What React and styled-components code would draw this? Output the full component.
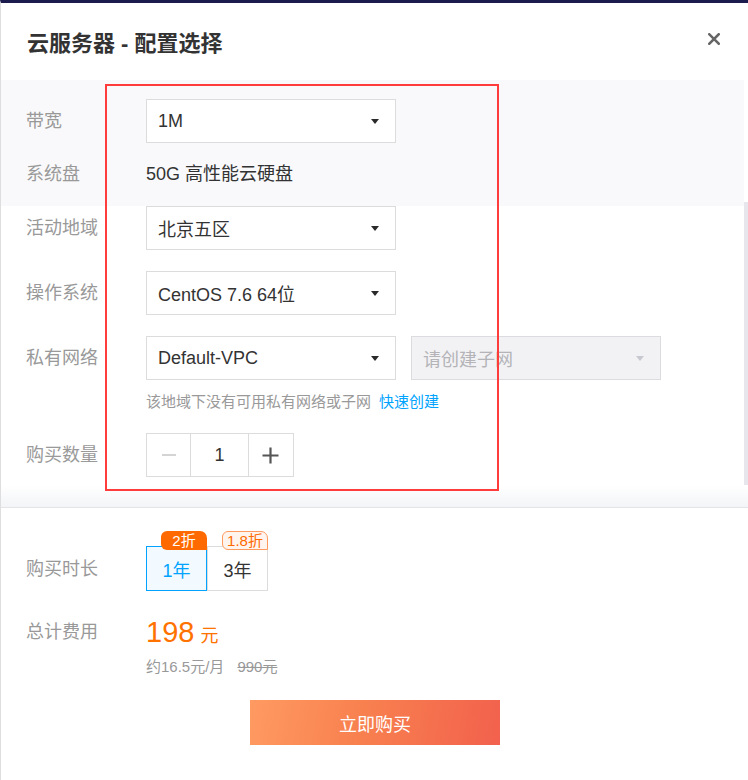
import React from 'react';
import styled, { createGlobalStyle } from 'styled-components';

const GlobalStyle = createGlobalStyle`
  html, body {
    margin: 0;
    padding: 0;
    background: #fff;
  }
  body {
    font-family: "Liberation Sans", "Noto Sans CJK SC", sans-serif;
    color: #333;
  }
  * {
    box-sizing: border-box;
  }
`;

// whole dialog
const Page = styled.div`
  position: relative;
  width: 748px;
  height: 780px;
  border-top: 3px solid #1b1b4e;
  border-left: 1px solid #dedede;
  background: #fff;
  display: flex;
  flex-direction: column;
  overflow: hidden;
`;

const Header = styled.div`
  height: 77px;
  flex-shrink: 0;
  padding: 26px 26px 0 26px;
  display: flex;
  justify-content: space-between;
  align-items: flex-start;
`;

const Title = styled.h1`
  margin: 0;
  font-size: 22px;
  line-height: 30px;
  font-weight: 700;
  color: #333;
`;

const Close = styled.button`
  margin: 4px 2px 0 0;
  padding: 0;
  border: 0;
  background: none;
  width: 12px;
  height: 12px;
  display: flex;
  cursor: pointer;
`;

const Body = styled.div`
  position: relative;
  display: flex;
  flex-direction: column;
  flex-shrink: 0;
`;

const FixedPanel = styled.div`
  background: #f9f9fb;
  margin-right: 4px;
  padding: 19px 0 10px 25px;
  display: flex;
  flex-direction: column;
  gap: 9px;
`;

const ScrollArea = styled.div`
  display: flex;
  flex-direction: column;
`;

const Rows = styled.div`
  padding: 0 0 8px 25px;
  display: flex;
  flex-direction: column;
  gap: 21px;
`;

const Fade = styled.div`
  height: 23px;
  background: linear-gradient(to bottom, #ffffff, #f3f4f7);
  border-bottom: 1px solid #e4e4e8;
`;

const ScrollThumb = styled.div`
  position: absolute;
  right: 0;
  top: 122px;
  width: 4px;
  height: 283px;
  background: #e6e6ec;
`;

const Row = styled.div`
  display: grid;
  grid-template-columns: 120px auto;
  align-items: ${({ $top }) => ($top ? 'start' : 'center')};
`;

const Label = styled.div`
  font-size: 18px;
  line-height: ${({ $lh }) => $lh || 44}px;
  color: #999;
`;

const Plain = styled.div`
  font-size: 18px;
  line-height: 44px;
  color: #333;
`;

const Controls = styled.div`
  display: flex;
  flex-direction: column;
`;

const SelectGroup = styled.div`
  display: flex;
  gap: 15px;
`;

const Select = styled.div`
  width: 250px;
  height: 44px;
  border: 1px solid ${({ $disabled }) => ($disabled ? '#dcdce0' : '#dcdcdc')};
  background: ${({ $disabled }) => ($disabled ? '#f2f2f5' : '#fff')};
  color: ${({ $disabled }) => ($disabled ? '#b4b4b8' : '#333')};
  font-size: 18px;
  padding: 0 16px 0 11px;
  display: flex;
  align-items: center;
  justify-content: space-between;
`;

const Caret = styled.span`
  width: 0;
  height: 0;
  border-left: 4.5px solid transparent;
  border-right: 4.5px solid transparent;
  border-top: 5px solid ${({ $disabled }) => ($disabled ? '#c8c8d0' : '#2a2a2a')};
`;

const Hint = styled.div`
  margin-top: 12px;
  font-size: 15px;
  line-height: 20px;
  color: #999;
`;

const Link = styled.a`
  margin-left: 8px;
  color: #00a4ff;
  text-decoration: none;
`;

const Stepper = styled.div`
  display: flex;
  width: 148px;
  height: 44px;
  border: 1px solid #dcdcdc;
`;

const StepBtn = styled.div`
  width: 43px;
  display: flex;
  align-items: center;
  justify-content: center;
`;

const StepValue = styled.div`
  width: 59px;
  border-left: 1px solid #dcdcdc;
  border-right: 1px solid #dcdcdc;
  display: flex;
  align-items: center;
  justify-content: center;
  font-size: 18px;
  color: #333;
`;

const Footer = styled.div`
  padding: 38px 0 0 25px;
  display: flex;
  flex-direction: column;
  gap: 21px;
`;

const Durations = styled.div`
  display: flex;
`;

const Duration = styled.div`
  position: relative;
  width: 61px;
  height: 45px;
  border: 1px solid ${({ $active }) => ($active ? '#00a4ff' : '#dcdcdc')};
  background: ${({ $active }) => ($active ? '#f2faff' : '#fff')};
  color: ${({ $active }) => ($active ? '#00a4ff' : '#333')};
  font-size: 18px;
  display: flex;
  align-items: center;
  justify-content: center;
`;

const Discount = styled.span`
  position: absolute;
  top: -16px;
  right: -1px;
  min-width: 46px;
  height: 19px;
  padding: 0 4px;
  border-radius: 6px 7px 0 6px;
  font-size: 15px;
  line-height: ${({ $solid }) => ($solid ? 19 : 17)}px;
  text-align: center;
  color: ${({ $solid }) => ($solid ? '#fff' : '#ff6a00')};
  background: ${({ $solid }) => ($solid ? '#ff6a00' : '#fff5ee')};
  border: ${({ $solid }) => ($solid ? 'none' : '1px solid #ff9a5e')};
`;

const PriceBlock = styled.div`
  display: flex;
  flex-direction: column;
`;

const PriceLine = styled.div`
  line-height: 40px;
  color: #ff7200;
`;

const Amount = styled.span`
  font-size: 29px;
`;

const Unit = styled.span`
  margin-left: 6px;
  font-size: 18px;
`;

const SubLine = styled.div`
  font-size: 15px;
  line-height: 20px;
  color: #999;
`;

const Strike = styled.span`
  margin-left: 13px;
  text-decoration: line-through;
`;

const BuyButton = styled.button`
  align-self: center;
  margin: 2px 0 0 -24px;
  width: 250px;
  height: 45px;
  border: 0;
  background: linear-gradient(100deg, #ff9a62 0%, #f8804f 45%, #f2614d 100%);
  color: #fff;
  font-family: inherit;
  font-size: 18px;
  cursor: pointer;
`;

// annotation frame drawn over the form
const Highlight = styled.div`
  position: absolute;
  left: 104px;
  top: 81px;
  width: 394px;
  height: 407px;
  border: 2px solid #ff3b3b;
  pointer-events: none;
`;

const CloseIcon = () => (
  <svg width="12" height="12" viewBox="0 0 12 12">
    <path d="M1.3 1.3 L10.7 10.7 M10.7 1.3 L1.3 10.7" stroke="#666" strokeWidth="2.6" strokeLinecap="square" />
  </svg>
);

const MinusIcon = () => (
  <svg width="16" height="16" viewBox="0 0 16 16">
    <path d="M1 8 H15" stroke="#d4d4d4" strokeWidth="2" />
  </svg>
);

const PlusIcon = () => (
  <svg width="17" height="17" viewBox="0 0 17 17">
    <path d="M0.5 8.5 H16.5 M8.5 0.5 V16.5" stroke="#555" strokeWidth="2.2" />
  </svg>
);

const Dropdown = ({ value, disabled }) => (
  <Select $disabled={disabled}>
    <span>{value}</span>
    <Caret $disabled={disabled} />
  </Select>
);

export default function App() {
  return (
    <>
      <GlobalStyle />
      <Page>
        <Header>
          <Title>云服务器 - 配置选择</Title>
          <Close aria-label="关闭">
            <CloseIcon />
          </Close>
        </Header>

        <Body>
          <FixedPanel>
            <Row>
              <Label>带宽</Label>
              <Dropdown value="1M" />
            </Row>
            <Row>
              <Label>系统盘</Label>
              <Plain>50G 高性能云硬盘</Plain>
            </Row>
          </FixedPanel>

          <ScrollArea>
            <Rows>
              <Row>
                <Label>活动地域</Label>
                <Dropdown value="北京五区" />
              </Row>
              <Row>
                <Label>操作系统</Label>
                <Dropdown value="CentOS 7.6 64位" />
              </Row>
              <Row $top>
                <Label>私有网络</Label>
                <Controls>
                  <SelectGroup>
                    <Dropdown value="Default-VPC" />
                    <Dropdown value="请创建子网" disabled />
                  </SelectGroup>
                  <Hint>
                    该地域下没有可用私有网络或子网
                    <Link href="#">快速创建</Link>
                  </Hint>
                </Controls>
              </Row>
              <Row>
                <Label>购买数量</Label>
                <Stepper>
                  <StepBtn>
                    <MinusIcon />
                  </StepBtn>
                  <StepValue>1</StepValue>
                  <StepBtn>
                    <PlusIcon />
                  </StepBtn>
                </Stepper>
              </Row>
            </Rows>
            <Fade />
          </ScrollArea>
          <ScrollThumb />
        </Body>

        <Footer>
          <Row>
            <Label>购买时长</Label>
            <Durations>
              <Duration $active>
                1年
                <Discount $solid>2折</Discount>
              </Duration>
              <Duration>
                3年
                <Discount>1.8折</Discount>
              </Duration>
            </Durations>
          </Row>
          <Row $top>
            <Label $lh={40}>总计费用</Label>
            <PriceBlock>
              <PriceLine>
                <Amount>198</Amount>
                <Unit>元</Unit>
              </PriceLine>
              <SubLine>
                约16.5元/月
                <Strike>990元</Strike>
              </SubLine>
            </PriceBlock>
          </Row>
          <BuyButton>立即购买</BuyButton>
        </Footer>

        <Highlight />
      </Page>
    </>
  );
}
